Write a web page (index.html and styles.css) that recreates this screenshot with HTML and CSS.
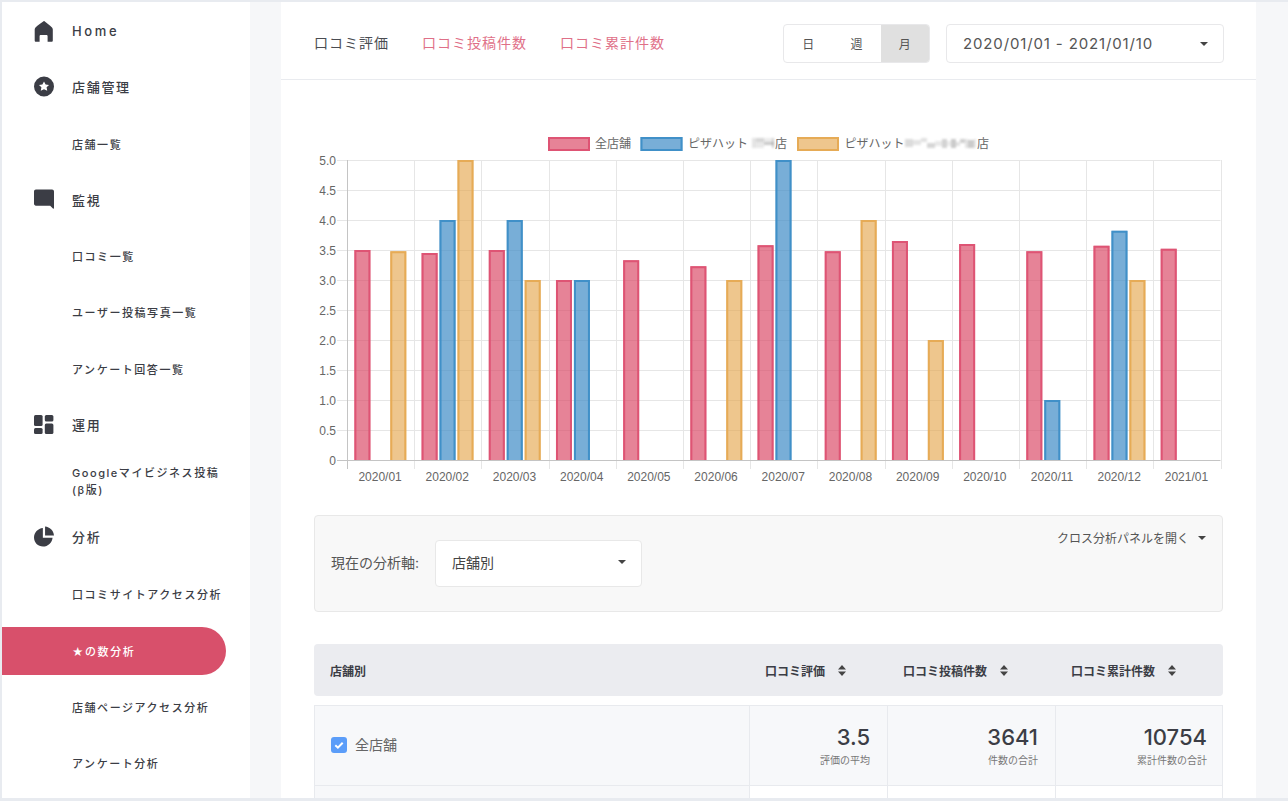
FILE: index.html
```html
<!doctype html>
<html lang="ja">
<head>
    <meta charset="utf-8">
    <title>★の数分析</title>
    <link rel="stylesheet" href="styles.css">
</head>
<body>
    <div class="frame">
        <!-- サイドメニュー -->
        <nav class="sidebar">
            <a class="navHead homeItem">
                <svg class="navIcon" viewBox="0 0 20 21"><path d="M9.600 0.200c.3-.2.6-.2.9 0C13 2 15.600 4 18 6.600c.5.6.8 1.200.8 2v10.800c0 .8-.5 1.300-1.200 1.300h-4V15.200c0-.7-.5-1.200-1.200-1.200H6.800c-.7 0-1.200.5-1.200 1.200v5.500H1.900c-.7 0-1.200-.5-1.200-1.300V8.600c0-.8.3-1.400.8-2C3.900 4 6.700 2 9.600.2z"/></svg>
                <span>Home</span>
            </a>
            <a class="navHead">
                <svg class="navIcon" viewBox="0 0 21 21"><path fill-rule="evenodd" d="M10.500 0a10.500 10.500 0 1 0 0 21a10.500 10.500 0 0 0 0-21zM10.500 5.200l1.700 3.200 3.600.5-2.600 2.500.7 3.600-3.400-1.700-3.400 1.700.7-3.600-2.600-2.500 3.600-.5z"/></svg>
                <span>店舗管理</span>
            </a>
            <a class="navSub">店舗一覧</a>
            <a class="navHead">
                <svg class="navIcon" viewBox="0 0 21 21"><path d="M2 0h17c1.100 0 2 .9 2 2v17.500c0 .6-.7.9-1.100.5L17 17H2c-1.100 0-2-.9-2-2V2C0 .9.9 0 2 0z"/></svg>
                <span>監視</span>
            </a>
            <a class="navSub">口コミ一覧</a>
            <a class="navSub">ユーザー投稿写真一覧</a>
            <a class="navSub">アンケート回答一覧</a>
            <a class="navHead">
                <svg class="navIcon" viewBox="0 0 20 19"><rect x="0" y="0" width="8.600" height="11" rx="1.500"/><rect x="10.800" y="0" width="8.600" height="6.600" rx="1.500"/><rect x="0" y="13" width="8.600" height="6" rx="1.500"/><rect x="10.800" y="8.400" width="8.600" height="10.600" rx="1.500"/></svg>
                <span>運用</span>
            </a>
            <a class="navSub twoLine">Googleマイビジネス投稿<br>(β版)</a>
            <a class="navHead">
                <svg class="navIcon" viewBox="0 0 21 21"><path d="M9.300 1.500v10.200h10.200C19 16.900 14.700 21 9.500 21 4.200 21 0 16.700 0 11.500 0 6.300 4.100 2 9.300 1.500z"/><path d="M11.600 0c4.900.4 8.900 4.400 9.400 9.400h-9.400z"/></svg>
                <span>分析</span>
            </a>
            <a class="navSub">口コミサイトアクセス分析</a>
            <a class="navSub active">★の数分析</a>
            <a class="navSub">店舗ページアクセス分析</a>
            <a class="navSub">アンケート分析</a>
        </nav>

        <div class="mainArea">
            <main class="content">
                <!-- タブと期間 -->
                <header class="topBar">
                    <div class="tabs">
                        <span class="tab current">口コミ評価</span>
                        <span class="tab">口コミ投稿件数</span>
                        <span class="tab">口コミ累計件数</span>
                    </div>
                    <div class="periodGroup">
                        <div class="segment">
                            <span class="segItem">日</span>
                            <span class="segItem">週</span>
                            <span class="segItem on">月</span>
                        </div>
                        <div class="dateSelect">
                            <span>2020/01/01 - 2021/01/10</span>
                            <i class="caret"></i>
                        </div>
                    </div>
                </header>

                <div class="body">
                    <!-- グラフは chart.js で描画 -->
                    <div class="chartBox" id="chart"></div>

                    <section class="axisPanel">
                        <div class="axisLeft">
                            <span class="axisLabel">現在の分析軸:</span>
                            <div class="axisSelect">
                                <span>店舗別</span>
                                <i class="caret"></i>
                            </div>
                        </div>
                        <div class="crossLink">
                            <span>クロス分析パネルを開く</span>
                            <i class="caret"></i>
                        </div>
                    </section>

                    <div class="tableHead">
                        <div class="headCell">店舗別</div>
                        <div class="headCell">口コミ評価
                            <svg class="sortIcon" viewBox="0 0 8 11"><path d="M4 0l4 4.400H0zM4 11L0 6.600h8z"/></svg>
                        </div>
                        <div class="headCell">口コミ投稿件数
                            <svg class="sortIcon" viewBox="0 0 8 11"><path d="M4 0l4 4.400H0zM4 11L0 6.600h8z"/></svg>
                        </div>
                        <div class="headCell">口コミ累計件数
                            <svg class="sortIcon" viewBox="0 0 8 11"><path d="M4 0l4 4.400H0zM4 11L0 6.600h8z"/></svg>
                        </div>
                    </div>

                    <div class="tableBody">
                        <div class="cell nameCell">
                            <span class="check"><svg viewBox="0 0 16 16"><path d="M4.300 8.300l2.600 2.400 4.800-5" fill="none" stroke="#fff" stroke-width="2"/></svg></span>
                            <span class="nameText">全店舗</span>
                        </div>
                        <div class="cell numCell tint"><b>3.5</b><small>評価の平均</small></div>
                        <div class="cell numCell tint"><b>3641</b><small>件数の合計</small></div>
                        <div class="cell numCell tint lastNum"><b>10754</b><small>累計件数の合計</small></div>
                        <div class="cell nameCell"></div>
                        <div class="cell"></div>
                        <div class="cell"></div>
                        <div class="cell"></div>
                    </div>
                </div>
            </main>
        </div>
    </div>
    <script src="chart.js"></script>
</body>
</html>
```
FILE: styles.css
```css
*{margin: 0;padding: 0;box-sizing: border-box;}
html,body{height: 801px;overflow: hidden;}
body{
    padding: 2px 0 3px 2px;
    background: #e8ebf0;
    color: #3b3d45;
    font-family: Inter, "Noto Sans CJK JP", sans-serif;
}
.frame{display: flex;height: 796px;overflow: hidden;}

/* sidebar */
.sidebar{width: 248px;flex: none;padding-top: 1px;background: #fff;display: flex;flex-direction: column;}
.navHead{
    display: flex;align-items: center;height: 56.3px;flex: none;
    padding: 0 0 2px 32px;gap: 18px;font-size: 13px;font-weight: 500;letter-spacing: 1.7px;
}
.homeItem{padding-bottom: 0;letter-spacing: 2.6px;}
.navIcon{width: 20px;height: 21px;fill: #3b3d45;flex: none;}
.navSub{
    display: block;height: 56.3px;flex: none;padding: 21px 0 0 70px;
    font-size: 11px;font-weight: 500;letter-spacing: 1.55px;line-height: 17px;
}
.navSub.twoLine{padding-top: 12px;}
.navSub.active{
    height: 48px;margin: 5px 24.5px 3.3px 0;padding-top: 17px;
    background: #d8506b;color: #fff;border-radius: 0 24px 24px 0;
}

/* main */
.mainArea{flex: 1;background: #f6f7f9;padding: 0 32px 0 31px;}
.content{width: 975px;height: 100%;background: #fff;}
.topBar{
    height: 78px;padding: 22px 32px 16px 33px;border-bottom: 1px solid #e9ebef;
    display: flex;align-items: center;justify-content: space-between;
}
.tabs{display: flex;gap: 33px;margin-bottom: 4px;}
.tab{font-size: 14px;letter-spacing: 1px;color: #df7088;}
.tab.current{color: #4a4c52;}
.periodGroup{display: flex;gap: 16px;}
.segment{display: flex;width: 147px;height: 39px;border: 1px solid #e8e8ea;border-radius: 4px;overflow: hidden;}
.segItem{flex: 1;display: flex;align-items: center;justify-content: center;font-size: 12px;color: #555;}
.segItem.on{background: #e0e0e0;}
.dateSelect{
    width: 278px;height: 39px;padding: 0 15px 0 16px;border: 1px solid #e8e8ea;border-radius: 4px;
    display: flex;align-items: center;justify-content: space-between;
    font-size: 15px;letter-spacing: .86px;color: #555;
}
.caret{width: 0;height: 0;flex: none;border: 4px solid transparent;border-top-color: #444;border-bottom: 0;}

.body{padding: 50px 33px 0;}
.chartBox{height: 360px;}
.chartBox svg{display: block;width: 909px;height: 360px;font-family: "Liberation Sans", "Noto Sans CJK JP", sans-serif;font-size: 12px;}
.gridLine{stroke: #e6e6e6;stroke-width: 1;}
.axisLine{stroke: #c4c4c4;stroke-width: 1;}
.chartText{fill: #666;}
.blurBlock{fill: #777;}
.mosaic{filter: blur(1px);}

.axisPanel{
    height: 97px;margin-top: 25px;padding: 13px 16px 0 16px;
    background: #f8f8f8;border: 1px solid #e8e8e8;border-radius: 4px;
    display: flex;justify-content: space-between;align-items: flex-start;
}
.axisLeft{display: flex;align-items: center;gap: 16px;margin-top: 11px;}
.axisLabel{font-size: 14px;color: #555;padding-bottom: 3px;}
.axisSelect{
    width: 207px;height: 47px;padding: 0 15px 3px 16px;background: #fff;border: 1px solid #e8e8e8;border-radius: 4px;
    display: flex;align-items: center;justify-content: space-between;font-size: 14px;color: #444;
}
.crossLink{display: flex;align-items: center;gap: 9px;font-size: 12px;color: #555;}

.tableHead{
    display: grid;grid-template-columns: 436px 138px 168px 167px;
    height: 52px;margin-top: 32px;background: #ebecf0;border-radius: 4px;
}
.headCell{display: flex;align-items: center;gap: 13px;padding-left: 15px;font-size: 12px;font-weight: 700;color: #3b3d45;}
.headCell:first-child{padding-left: 16px;}
.sortIcon{width: 8px;height: 11px;fill: #444;}
.tableBody{
    display: grid;grid-template-columns: 436px 138px 168px 167px;grid-auto-rows: 80px;
    margin-top: 9px;
}
.cell{border: 1px solid #e8eaee;border-width: 1px 1px 0 0;}
.cell:nth-child(4n+1){border-left-width: 1px;}
.nameCell{display: flex;align-items: center;gap: 8px;padding: 0 0 1px 16px;background: #f7f8fa;}
.nameText{font-size: 14px;color: #666;padding-bottom: 2px;}
.tint{background: #f7f8fa;}
.check{width: 16px;height: 16px;border-radius: 3px;background: #5b9df9;}
.check svg{display: block;width: 16px;height: 16px;}
.numCell{display: flex;flex-direction: column;align-items: flex-end;justify-content: center;padding-right: 17px;}
.numCell.lastNum{padding-right: 15px;}
.numCell b{font-size: 22px;font-weight: 500;line-height: 26px;margin-top: -1px;color: #3b3d45;}
.numCell small{font-size: 10px;line-height: 14px;margin-top: 3px;color: #777;}
```
FILE: chart.js
```js
// グラフのデータ
var labels = ['2020/01','2020/02','2020/03','2020/04','2020/05','2020/06','2020/07','2020/08','2020/09','2020/10','2020/11','2020/12','2021/01'];
var series = [
    {fill: 'rgba(218,72,102,.68)', line: '#de5474', data: [3.5,3.45,3.5,3,3.33,3.23,3.58,3.48,3.65,3.6,3.48,3.57,3.52]},
    {fill: 'rgba(62,140,198,.7)', line: '#4090c8', data: [0,4,4,3,0,0,5,0,0,0,1,3.82,0]},
    {fill: 'rgba(229,168,80,.65)', line: '#e6ab56', data: [3.48,5,3,0,0,3,0,4,2,0,0,3,0]}
];

var plotL = 347, plotR = 1220.5, plotT = 160, plotB = 460;
var groupW = (plotR - plotL) / 13;
var out = '';

function line(x1, y1, x2, y2, cls){
    return '<line class="' + cls + '" x1="' + x1 + '" y1="' + y1 + '" x2="' + x2 + '" y2="' + y2 + '"/>';
}
function text(x, y, str, anchor){
    return '<text class="chartText" x="' + x + '" y="' + y + '" text-anchor="' + anchor + '">' + str + '</text>';
}

// 横のグリッド
for(var i = 0; i <= 10; i++){
    var gy = plotT + i * 30 + .5;
    if(i < 10) out += line(337, gy, plotR, gy, 'gridLine');
    var val = i == 10 ? '0' : ((10 - i) / 2).toFixed(1);
    out += text(336, gy + 4, val, 'end');
}
// 縦のグリッド
for(var j = 1; j <= 13; j++){
    var gx = Math.round(plotL + j * groupW) + .5;
    out += line(gx, plotT, gx, plotB + 9, 'gridLine');
}
// 棒
series.forEach(function(s, n){
    s.data.forEach(function(v, k){
        if(!v) return;
        var x = plotL + k * groupW + 7.4 + n * 17.95;
        var h = v * 60, y = plotB - h, w = 16;
        out += '<rect x="' + x + '" y="' + y + '" width="' + w + '" height="' + h + '" fill="' + s.fill + '"/>';
        out += '<path d="M' + (x + 1) + ' ' + plotB + 'V' + (y + 1) + 'H' + (x + w - 1) + 'V' + plotB + '" fill="none" stroke="' + s.line + '" stroke-width="2"/>';
    });
});
// 軸
out += line(plotL + .5, plotT, plotL + .5, plotB + 9, 'axisLine');
out += line(337, plotB + .5, plotR, plotB + .5, 'axisLine');
labels.forEach(function(l, k){
    out += text(plotL + (k + .5) * groupW - .5, 481, l, 'middle');
});

// 凡例
function legendBox(x, s){
    return '<rect x="' + x + '" y="137" width="42" height="14" fill="' + s.fill + '"/>' +
        '<rect x="' + (x + 1) + '" y="138" width="40" height="12" fill="none" stroke="' + s.line + '" stroke-width="2"/>';
}
out += legendBox(548, series[0]) + text(595, 148, '全店舗', 'start');
out += legendBox(640.5, series[1]) + text(688, 148, 'ピザハット', 'start') + text(775, 148, '店', 'start');
out += legendBox(797, series[2]) + text(844.5, 148, 'ピザハット', 'start') + text(977, 148, '店', 'start');

// モザイクの部分（店舗名）
var blocks = [
    [752,138,4,10,.2],[756,138,8,4,.3],[756,142,8,6,.16],[764,138,8,4,.14],[764,142,10,3,.4],[772,138,2,10,.35],
    [905,139,8,8,.26],[913,140,8,5,.2],[921,138,6,4,.22],[927,143,8,5,.3],[935,141,7,5,.16],[942,139,5,9,.32],[947,141,4,5,.14],[951,139,5,9,.38],[956,142,4,4,.22],[960,139,5,4,.35],[965,139,3,9,.2],[968,140,6,8,.38],[974,139,2,9,.18]
];
out += '<g class="mosaic">';
blocks.forEach(function(b){
    out += '<rect class="blurBlock" x="' + b[0] + '" y="' + b[1] + '" width="' + b[2] + '" height="' + b[3] + '" opacity="' + b[4] + '"/>';
});
out += '</g>';

document.getElementById('chart').innerHTML =
    '<svg viewBox="314 130 909 360" xmlns="http://www.w3.org/2000/svg">' + out + '</svg>';
```
